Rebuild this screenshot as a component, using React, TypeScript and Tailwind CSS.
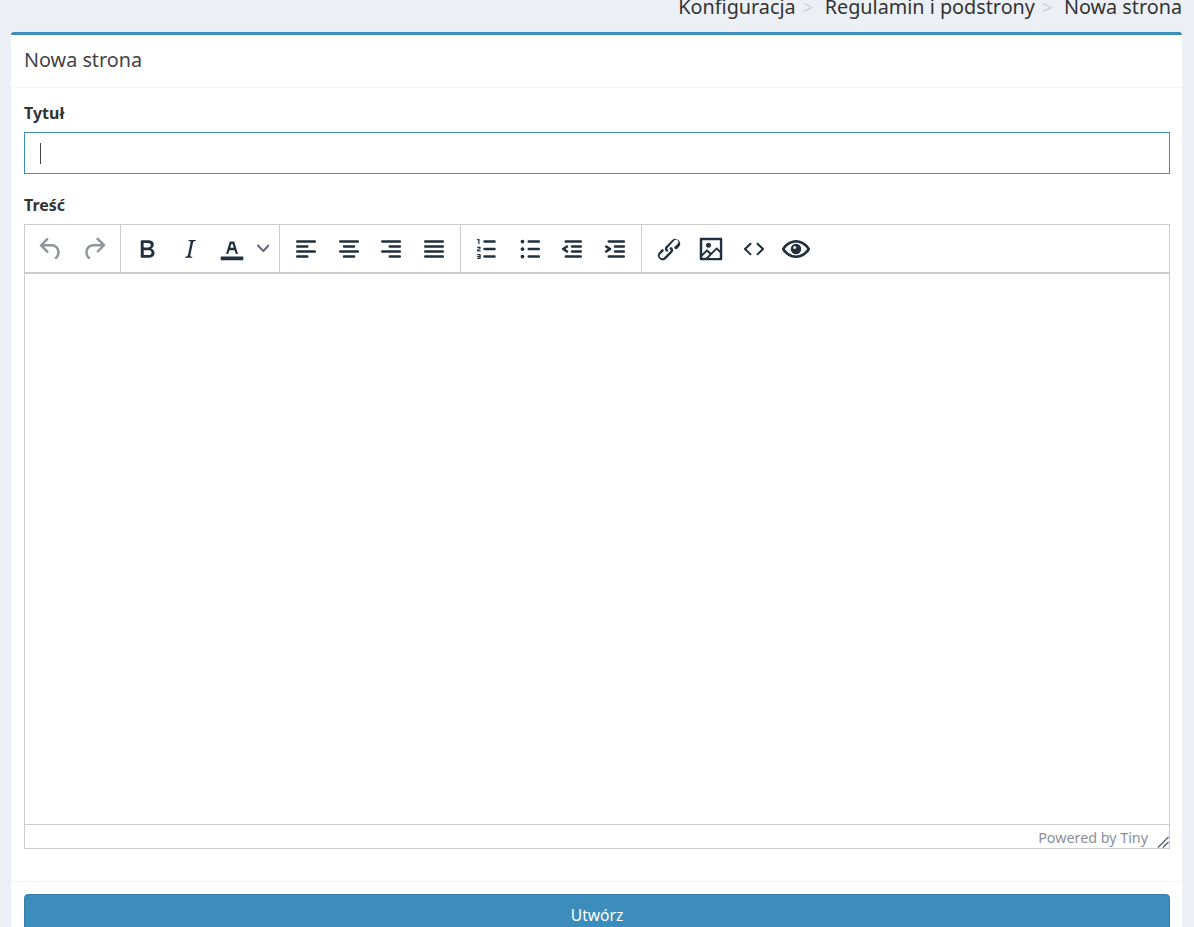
import React from "react";

const P = {
  undo: "M6.4 8H12c3.7 0 6.2 2 6.8 5.1.6 2.7-.4 5.6-2.3 6.8a1 1 0 0 1-1-1.8c1.1-.6 1.8-2.7 1.4-4.6-.5-2.1-2.1-3.5-4.9-3.5H6.4l3.3 3.3a1 1 0 1 1-1.4 1.4l-5-5a1 1 0 0 1 0-1.4l5-5a1 1 0 0 1 1.4 1.4L6.4 8z",
  redo: "M17.6 10H12c-2.8 0-4.4 1.4-4.9 3.5-.4 2 .3 4 1.4 4.6a1 1 0 1 1-1 1.8c-2-1.2-2.9-4.1-2.3-6.8.6-3 3-5.1 6.8-5.1h5.6l-3.3-3.3a1 1 0 1 1 1.4-1.4l5 5a1 1 0 0 1 0 1.4l-5 5a1 1 0 0 1-1.4-1.4l3.3-3.3z",
  bold: "M7.8 19c-.3 0-.5 0-.6-.2l-.2-.5V5.7c0-.2 0-.4.2-.5l.6-.2h5c1.5 0 2.7.3 3.5 1 .7.6 1.1 1.4 1.1 2.5a3 3 0 0 1-.6 1.9c-.4.6-1 1-1.6 1.2.4.1.9.3 1.3.6s.8.7 1 1.2c.4.4.5 1 .5 1.6 0 1.3-.4 2.3-1.3 3-.8.7-2.1 1-3.8 1H7.8zm5-8.3c.6 0 1.2-.1 1.6-.5.4-.3.6-.7.6-1.3 0-1.1-.8-1.7-2.3-1.7H9.3v3.5h3.4zm.5 6c.7 0 1.3-.1 1.7-.4.4-.4.6-.9.6-1.5s-.2-1-.7-1.4c-.4-.3-1-.4-2-.4H9.4v3.8h4z",
  italic: "M16.7 4.7l-.1.9h-.3c-.6 0-1 0-1.4.3-.3.3-.4.6-.5 1.1l-2.1 9.8v.6c0 .5.4.8 1.4.8h.2l-.2.8H8l.2-.8h.2c1.1 0 1.8-.5 2-1.5l2-9.8.1-.5c0-.6-.4-.8-1.4-.8h-.3l.2-.9h5.8z",
  color: "M3 18h18v3H3zM8.7 16h-.8a.5.5 0 0 1-.5-.6l2.7-9c.1-.3.3-.4.5-.4h2.8c.2 0 .4.1.5.4l2.7 9a.5.5 0 0 1-.5.6h-.8a.5.5 0 0 1-.4-.4l-.7-2.2c0-.2-.2-.4-.5-.4h-3.4c-.3 0-.4.2-.5.4l-.7 2.2c0 .3-.2.4-.4.4zm2.6-7.6l-.6 2a.5.5 0 0 0 .5.6h1.6a.5.5 0 0 0 .5-.6l-.6-2c0-.3-.3-.4-.5-.4h-.4c-.2 0-.4.1-.5.4z",
  left: "M5 5h14c.6 0 1 .4 1 1s-.4 1-1 1H5a1 1 0 1 1 0-2zm0 4h8c.6 0 1 .4 1 1s-.4 1-1 1H5a1 1 0 1 1 0-2zm0 8h8c.6 0 1 .4 1 1s-.4 1-1 1H5a1 1 0 0 1 0-2zm0-4h14c.6 0 1 .4 1 1s-.4 1-1 1H5a1 1 0 0 1 0-2z",
  center: "M5 5h14c.6 0 1 .4 1 1s-.4 1-1 1H5a1 1 0 1 1 0-2zm3 4h8c.6 0 1 .4 1 1s-.4 1-1 1H8a1 1 0 1 1 0-2zm0 8h8c.6 0 1 .4 1 1s-.4 1-1 1H8a1 1 0 0 1 0-2zm-3-4h14c.6 0 1 .4 1 1s-.4 1-1 1H5a1 1 0 0 1 0-2z",
  right: "M5 5h14c.6 0 1 .4 1 1s-.4 1-1 1H5a1 1 0 1 1 0-2zm6 4h8c.6 0 1 .4 1 1s-.4 1-1 1h-8a1 1 0 0 1 0-2zm0 8h8c.6 0 1 .4 1 1s-.4 1-1 1h-8a1 1 0 0 1 0-2zm-6-4h14c.6 0 1 .4 1 1s-.4 1-1 1H5a1 1 0 0 1 0-2z",
  justify: "M5 5h14c.6 0 1 .4 1 1s-.4 1-1 1H5a1 1 0 1 1 0-2zm0 4h14c.6 0 1 .4 1 1s-.4 1-1 1H5a1 1 0 1 1 0-2zm0 4h14c.6 0 1 .4 1 1s-.4 1-1 1H5a1 1 0 0 1 0-2zm0 4h14c.6 0 1 .4 1 1s-.4 1-1 1H5a1 1 0 0 1 0-2z",
  ol: "M10 17h8c.6 0 1 .4 1 1s-.4 1-1 1h-8a1 1 0 0 1 0-2zm0-6h8c.6 0 1 .4 1 1s-.4 1-1 1h-8a1 1 0 0 1 0-2zm0-6h8c.6 0 1 .4 1 1s-.4 1-1 1h-8a1 1 0 1 1 0-2zM6 4v3.5c0 .3-.2.5-.5.5a.5.5 0 0 1-.5-.5V5h-.5a.5.5 0 0 1 0-1H6zm-1 8.8l.2.2h1.3c.3 0 .5.2.5.5s-.2.5-.5.5H4.9a1 1 0 0 1-.9-1V13c0-.4.3-.8.6-1l1.2-.4.2-.3a.2.2 0 0 0-.2-.2H4.5a.5.5 0 0 1-.5-.5c0-.3.2-.5.5-.5h1.6c.5 0 .9.4.9 1v.1c0 .4-.3.8-.6 1l-1.2.4-.2.3zM7 17v2c0 .6-.4 1-1 1H4.5a.5.5 0 0 1 0-1h1.2c.2 0 .3-.1.3-.3 0-.2-.1-.3-.3-.3H4.4a.4.4 0 1 1 0-.8h1.3c.2 0 .3-.1.3-.3 0-.2-.1-.3-.3-.3H4.5a.5.5 0 1 1 0-1H6c.6 0 1 .4 1 1z",
  ul: "M11 5h8c.6 0 1 .4 1 1s-.4 1-1 1h-8a1 1 0 0 1 0-2zm0 6h8c.6 0 1 .4 1 1s-.4 1-1 1h-8a1 1 0 0 1 0-2zm0 6h8c.6 0 1 .4 1 1s-.4 1-1 1h-8a1 1 0 0 1 0-2zM4.5 6c0-.4.1-.8.4-1 .3-.4.7-.5 1.1-.5.4 0 .8.1 1 .4.4.3.5.7.5 1.1 0 .4-.1.8-.4 1-.3.4-.7.5-1.1.5-.4 0-.8-.1-1-.4-.4-.3-.5-.7-.5-1.1zm0 6c0-.4.1-.8.4-1 .3-.4.7-.5 1.1-.5.4 0 .8.1 1 .4.4.3.5.7.5 1.1 0 .4-.1.8-.4 1-.3.4-.7.5-1.1.5-.4 0-.8-.1-1-.4-.4-.3-.5-.7-.5-1.1zm0 6c0-.4.1-.8.4-1 .3-.4.7-.5 1.1-.5.4 0 .8.1 1 .4.4.3.5.7.5 1.1 0 .4-.1.8-.4 1-.3.4-.7.5-1.1.5-.4 0-.8-.1-1-.4-.4-.3-.5-.7-.5-1.1z",
  outdent: "M7 5h12c.6 0 1 .4 1 1s-.4 1-1 1H7a1 1 0 1 1 0-2zm5 4h7c.6 0 1 .4 1 1s-.4 1-1 1h-7a1 1 0 0 1 0-2zm0 4h7c.6 0 1 .4 1 1s-.4 1-1 1h-7a1 1 0 0 1 0-2zm-5 4h12a1 1 0 0 1 0 2H7a1 1 0 0 1 0-2zm1.6-3.8a1 1 0 0 1-1.2 1.6l-3-2a1 1 0 0 1 0-1.6l3-2a1 1 0 0 1 1.2 1.6L6.8 12l1.8 1.2z",
  indent: "M7 5h12c.6 0 1 .4 1 1s-.4 1-1 1H7a1 1 0 1 1 0-2zm5 4h7c.6 0 1 .4 1 1s-.4 1-1 1h-7a1 1 0 0 1 0-2zm0 4h7c.6 0 1 .4 1 1s-.4 1-1 1h-7a1 1 0 0 1 0-2zm-5 4h12a1 1 0 0 1 0 2H7a1 1 0 0 1 0-2zm-2.6-3.8L6.2 12l-1.8-1.2a1 1 0 0 1 1.2-1.6l3 2a1 1 0 0 1 0 1.6l-3 2a1 1 0 1 1-1.2-1.6z",
  link: "M6.2 12.3a1 1 0 0 1 1.4 1.4l-2.1 2a2 2 0 1 0 2.7 2.8l4.8-4.8a1 1 0 0 0 0-1.4 1 1 0 1 1 1.4-1.3 2.9 2.9 0 0 1 0 4L9.6 20a3.9 3.9 0 0 1-5.5-5.5l2-2.2zm11.6-.6a1 1 0 0 1-1.4-1.4l2-2a2 2 0 1 0-2.6-2.8L11 10.9a1 1 0 0 0 0 1.4 1 1 0 1 1-1.4 1.4 2.9 2.9 0 0 1 0-4l4.8-4.8a3.9 3.9 0 0 1 5.5 5.5l-2 2.2z",
  image: "M5 15.7l3.3-3.2c.3-.3.7-.3 1 0L12 15l4.1-4c.3-.4.8-.4 1 0l2 1.9V5H5v10.7zM5 18V19h3l2.8-2.9-2-2L5 17.9zm14-3l-2.5-2.4-6.4 6.5H19v-4zM4 3h16c.6 0 1 .4 1 1v16c0 .6-.4 1-1 1H4a1 1 0 0 1-1-1V4c0-.6.4-1 1-1zm6 8a2 2 0 1 0 0-4 2 2 0 0 0 0 4z",
  code: "M9.8 15.7c.3.3.3.8 0 1-.3.4-.9.4-1.2 0l-4.4-4.1a.8.8 0 0 1 0-1.2l4.4-4.2c.3-.3.9-.3 1.2 0 .3.3.3.8 0 1.1L6 12l3.8 3.7zM14.2 15.7c-.3.3-.3.8 0 1 .4.4.9.4 1.2 0l4.4-4.1c.3-.3.3-.9 0-1.2l-4.4-4.2a.8.8 0 0 0-1.2 0c-.3.3-.3.8 0 1.1L18 12l-3.8 3.7z",
  eye: "M12 4.800c4.800 0 8.800 2.900 11.200 6.700a1 1 0 0 1 0 1c-2.400 3.800-6.400 6.700-11.200 6.700S3.200 16.300.8 12.500a1 1 0 0 1 0-1C3.200 7.700 7.200 4.800 12 4.800zm0 2.100c-3.700 0-6.900 2.100-9 5.100 2.100 3 5.300 5.100 9 5.100s6.900-2.100 9-5.100c-2.100-3-5.300-5.100-9-5.100zm0 .9a4.200 4.200 0 1 1 0 8.400 4.200 4.200 0 0 1 0-8.400zm-1 1.700a1.200 1.200 0 1 0 0 2.400 1.200 1.200 0 0 0 0-2.400z",
};

function Icon({ d, disabled }: { d: string; disabled?: boolean }) {
  return (
    <svg viewBox="0 0 24 24" className={disabled ? "w-[30px] h-[30px] fill-[#222f3e] opacity-50" : "w-[30px] h-[30px] fill-[#222f3e]"} fillRule="evenodd">
      <path d={d} />
    </svg>
  );
}

function Btn({ d, disabled }: { d: string; disabled?: boolean }) {
  return (
    <div className="w-[42.5px] h-[42.5px] flex items-center justify-center">
      <Icon d={d} disabled={disabled} />
    </div>
  );
}

const sep = "flex items-center h-full pl-[4.9px] pr-[5.1px] border-l-[1.25px] border-[#cccccc]";

export default function App() {
  return (
    <div className="h-[927px] overflow-hidden bg-[#ecf0f5] text-[#333333] font-['Noto_Sans','Liberation_Sans',sans-serif]">
      <div className="h-[32px] overflow-hidden flex items-end justify-end pr-[12px] pb-[10px] text-[19.8px] leading-[30px] whitespace-nowrap">
        <span>Konfiguracja</span>
        <span className="text-[#cccccc] w-[29px] pr-[4px] text-center text-[18px]">&gt;</span>
        <span>Regulamin i podstrony</span>
        <span className="text-[#cccccc] w-[29px] pr-[4px] text-center text-[18px]">&gt;</span>
        <span>Nowa strona</span>
      </div>

      <div className="ml-[11px] mr-[12px] bg-white border-t-[3px] border-[#3c8dbc] rounded-[3px]">
        <div className="h-[53px] border-b border-[#f4f4f4] pl-[13px] pr-[12px] pb-[3px] flex items-center text-[19.8px] text-[#444444]">
          Nowa strona
        </div>

        <div className="pl-[13px] pr-[12px] pt-[13px]">
          <label className="block h-[24px] leading-[24px] text-[16px] font-bold">Tytuł</label>
          <div className="mt-[7px] h-[42px] border border-[#3c8dbc] flex items-center pl-[15px]">
            <span className="block w-px h-[21px] bg-[#444444]" />
          </div>

          <label className="block mt-[19px] h-[24px] leading-[24px] text-[16px] font-bold">Treść</label>
          <div className="mt-[7px] h-[625px] border border-[#cccccc] flex flex-col">
            <div className="h-[49px] border-b-2 border-[#cccccc] flex items-stretch shrink-0">
              <div className="flex items-center px-[5px]">
                <Btn d={P.undo} disabled />
                <Btn d={P.redo} disabled />
              </div>
              <div className="flex items-center h-full pl-[5px] pr-[5px] border-l-[1.25px] border-[#cccccc]">
                <Btn d={P.bold} />
                <Btn d={P.italic} />
                <Btn d={P.color} />
                <svg viewBox="0 0 10 10" className="w-[12.500px] h-[12.500px] fill-[#222f3e] opacity-70 ml-[3px] mr-[5px]">
                  <path d="M8.700 2.200c.3-.3.8-.3 1 0 .4.400.4.900 0 1.200L5.700 7.800c-.3.300-.9.300-1.200 0L.2 3.400a.8.800 0 0 1 0-1.200c.3-.3.8-.3 1.100 0L5 6l3.700-3.800z" />
                </svg>
              </div>
              <div className={sep}>
                <Btn d={P.left} />
                <Btn d={P.center} />
                <Btn d={P.right} />
                <Btn d={P.justify} />
              </div>
              <div className={sep}>
                <Btn d={P.ol} />
                <Btn d={P.ul} />
                <Btn d={P.outdent} />
                <Btn d={P.indent} />
              </div>
              <div className="flex items-center h-full pl-[5.4px] pr-[4.6px] border-l-[1.25px] border-[#cccccc]">
                <Btn d={P.link} />
                <Btn d={P.image} />
                <Btn d={P.code} />
                <Btn d={P.eye} />
              </div>
            </div>
            <div className="flex-1" />
            <div className="h-[24px] border-t border-[#cccccc] flex items-center justify-end shrink-0 text-[14.3px] text-[#8a8f97]">
              <span className="pt-[2px]">Powered by Tiny</span>
              <svg viewBox="0 0 12 12" className="w-[12px] h-[12px] ml-[9px] self-end stroke-[#5f6670]" strokeWidth="1.500" fill="none">
                <path d="M1 11.500L11.500 1M6 11.500L11.500 6" />
              </svg>
            </div>
          </div>
        </div>

        <div className="mt-[32px] border-t border-[#f4f4f4] pl-[13px] pr-[12px] pt-[12px]">
          <div className="h-[44px] rounded-[4px] bg-[#3c8dbc] border border-[#367fa9] text-white text-[15.6px] flex items-center justify-center">
            Utwórz
          </div>
        </div>
      </div>
    </div>
  );
}
